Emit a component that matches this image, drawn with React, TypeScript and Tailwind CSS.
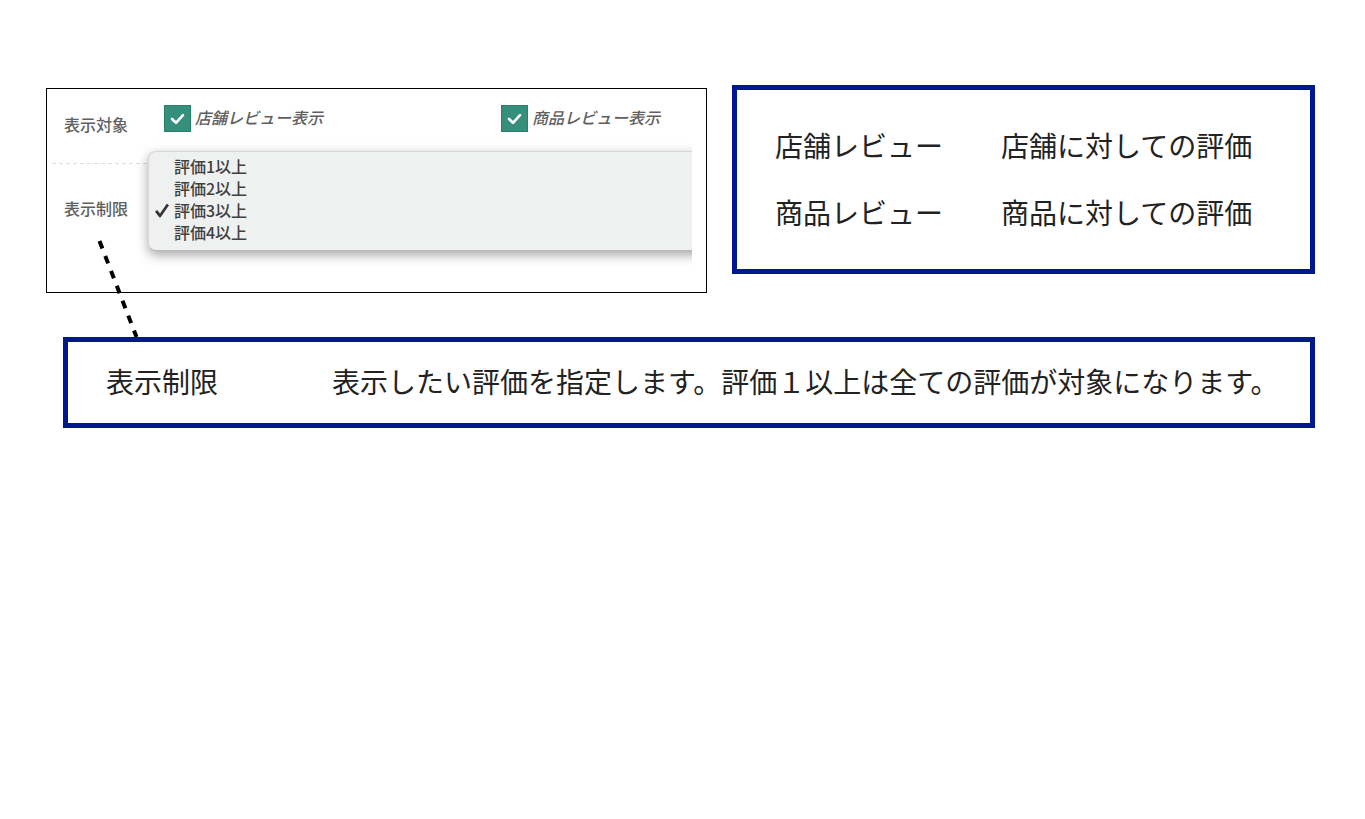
import { useState } from 'react';

const targets = [
  { id: 'shop', label: '店舗レビュー表示' },
  { id: 'item', label: '商品レビュー表示' },
];

const limits = ['評価1以上', '評価2以上', '評価3以上', '評価4以上'];

const reviewTypes = [
  { name: '店舗レビュー', text: '店舗に対しての評価' },
  { name: '商品レビュー', text: '商品に対しての評価' },
];

function TargetCheckbox({ id, label }: { id: string; label: string }) {
  return (
    <div className="flex items-start gap-1">
      <span className="grid size-[27px] shrink-0">
        <input
          id={id}
          type="checkbox"
          defaultChecked
          className="peer col-start-1 row-start-1 size-[27px] appearance-none border border-[#26806c] checked:bg-[#358f7b]"
        />
        <svg
          viewBox="0 0 27 27"
          className="pointer-events-none invisible col-start-1 row-start-1 size-[27px] peer-checked:visible"
          fill="none"
          stroke="#fff"
          strokeWidth="2.6"
          strokeLinecap="round"
          strokeLinejoin="round"
        >
          <path d="M8 14 12 17.8 19 10.2" />
        </svg>
      </span>
      <label htmlFor={id} className="text-base leading-6 font-medium whitespace-nowrap text-[#606060] italic">
        {label}
      </label>
    </div>
  );
}

function LimitMenu() {
  const [selected, setSelected] = useState(2);

  return (
    <ul
      role="listbox"
      aria-label="表示制限"
      className="absolute -top-[13px] -right-6 left-24 rounded-lg border border-[#d6d8d7] border-b-[#b9bbba] bg-[#eff1f0] pt-[3px] pb-[7px] shadow-[0_4px_12px_rgba(0,0,0,0.35)]"
    >
      {limits.map((limit, i) => (
        <li key={limit}>
          <button
            type="button"
            role="option"
            aria-selected={i === selected}
            onClick={() => setSelected(i)}
            className="flex w-full items-center gap-1 pl-[5px] text-base leading-[22px] font-medium text-[#404040]"
          >
            <svg viewBox="0 0 16 16" className="size-4 shrink-0">
              {i === selected && (
                <path d="M1 9.8 3.2 8 6 11.6 12.8 1.8 15 3.2 6.5 15.4H5.5Z" fill="#333" />
              )}
            </svg>
            {limit}
          </button>
        </li>
      ))}
    </ul>
  );
}

export default function App() {
  return (
    <main className="bg-white pt-[85px] pr-[50px] pb-10 pl-[46px] font-['Noto_Sans_CJK_JP',sans-serif] text-[#222]">
      <div className="grid grid-cols-[661fr_583fr] items-start gap-[25px]">
        <section className="relative mt-[3px] border border-black pr-3.5 pb-[26px] pl-[5px]">
          {/* clips the open menu and its shadow */}
          <div className="overflow-hidden">
            <div className="grid grid-cols-[96px_1fr]">
              <span className="pt-[23px] pb-[27px] pl-3 text-base leading-6 font-medium text-[#606060]">表示対象</span>
              <div className="grid grid-cols-[337fr_191fr] items-start pt-4 pl-4">
                {targets.map((t) => (
                  <TargetCheckbox key={t.id} id={t.id} label={t.label} />
                ))}
              </div>
            </div>
            <div className="h-px bg-[repeating-linear-gradient(90deg,#dedede_0_4px,transparent_4px_7px)]" />
            <div className="relative pt-8 pb-[46px] pl-3">
              <span className="text-base leading-6 font-medium text-[#606060]">表示制限</span>
              <LimitMenu />
            </div>
          </div>

          {/* connector down to the description box */}
          <svg
            viewBox="0 0 44 98"
            className="pointer-events-none absolute top-[150px] left-12 h-[98px] w-11"
            stroke="#000"
            strokeWidth="4"
            strokeDasharray="8 8"
          >
            <line x1="4.5" y1="2" x2="41.5" y2="98" />
          </svg>
        </section>

        <dl className="grid gap-y-[27px] border-5 border-[#00188f] px-[38px] pt-[35px] pb-[37px] text-[28px] leading-10">
          {reviewTypes.map((r) => (
            <div key={r.name} className="grid grid-cols-[226px_1fr] whitespace-nowrap">
              <dt>{r.name}</dt>
              <dd>{r.text}</dd>
            </div>
          ))}
        </dl>
      </div>

      <dl className="mt-11 ml-[17px] grid grid-cols-[226px_1fr] border-5 border-[#00188f] bg-white pt-[19px] pr-6 pb-[22px] pl-[38px] text-[28px] leading-10">
        <dt>表示制限</dt>
        <dd>表示したい評価を指定します。評価１以上は全ての評価が対象になります。</dd>
      </dl>
    </main>
  );
}
